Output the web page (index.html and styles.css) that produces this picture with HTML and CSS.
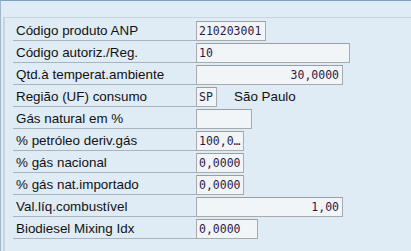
FILE: index.html
```html
<!DOCTYPE html>
<html lang="pt">
<head>
    <meta charset="UTF-8">
    <title>Dados ANP</title>
    <link rel="stylesheet" href="styles.css">
</head>
<body>
    <div class="frame">
        <div class="panel">
            <div class="row">
                <span class="label">Código produto ANP</span>
                <span class="field w70">210203001</span>
            </div>
            <div class="row">
                <span class="label">Código autoriz./Reg.</span>
                <span class="field w154">10</span>
            </div>
            <div class="row">
                <span class="label">Qtd.à temperat.ambiente</span>
                <span class="field w147 num">30,0000</span>
            </div>
            <div class="row">
                <span class="label">Região (UF) consumo</span>
                <span class="field w21">SP</span>
                <span class="desc">São Paulo</span>
            </div>
            <div class="row">
                <span class="label">Gás natural em %</span>
                <span class="field w56"></span>
            </div>
            <div class="row">
                <span class="label">% petróleo deriv.gás</span>
                <span class="field w48">100,0…</span>
            </div>
            <div class="row">
                <span class="label">% gás nacional</span>
                <span class="field w48">0,0000</span>
            </div>
            <div class="row">
                <span class="label">% gás nat.importado</span>
                <span class="field w48">0,0000</span>
            </div>
            <div class="row">
                <span class="label">Val.líq.combustível</span>
                <span class="field w147 num">1,00</span>
            </div>
            <div class="row">
                <span class="label">Biodiesel Mixing Idx</span>
                <span class="field w62">0,0000</span>
            </div>
        </div>
    </div>
</body>
</html>
```

FILE: styles.css
```css
body {
    margin: 0;
    background-color: #dfebf5;
    font-family: "Liberation Sans", Arial, sans-serif;
    font-size: 13.4px;
    color: #111;
}

.frame {
    height: 251px;
    box-sizing: border-box;
    border-top: 1px solid #7f9fc0;
    border-left: 1px solid #9fb8d0;
    padding-left: 2px;
}

.panel {
    margin-top: 16px;
    height: 240px;
    border-top: 1px solid #c9d4de;
    border-left: 2px solid #c9d4de;
    padding-top: 1px;
    padding-left: 8px;
}

.row {
    display: flex;
    align-items: flex-start;
    height: 22px;
}

.label {
    width: 180px;
    height: 21px;
    line-height: 23px;
    padding-left: 3px;
    border-bottom: 1px solid #a9b3bd;
    white-space: nowrap;
}

.field {
    box-sizing: border-box;
    height: 20px;
    margin-top: 2px;
    padding: 0 2px;
    border: 1px solid #a7abb0;
    border-top-color: #9b9fa4;
    background-color: #f2f5f8;
    font-family: "DejaVu Sans Mono", monospace;
    font-size: 11.5px;
    line-height: 18px;
    color: #2a1a45;
    white-space: nowrap;
    overflow: hidden;
}

.num {
    text-align: right;
    padding-right: 3px;
}

.desc {
    margin-left: 17px;
    line-height: 24px;
}

.w21 { width: 21px; }
.w48 { width: 48px; }
.w56 { width: 56px; }
.w62 { width: 62px; }
.w70 { width: 70px; }
.w147 { width: 147px; }
.w154 { width: 154px; }
```
